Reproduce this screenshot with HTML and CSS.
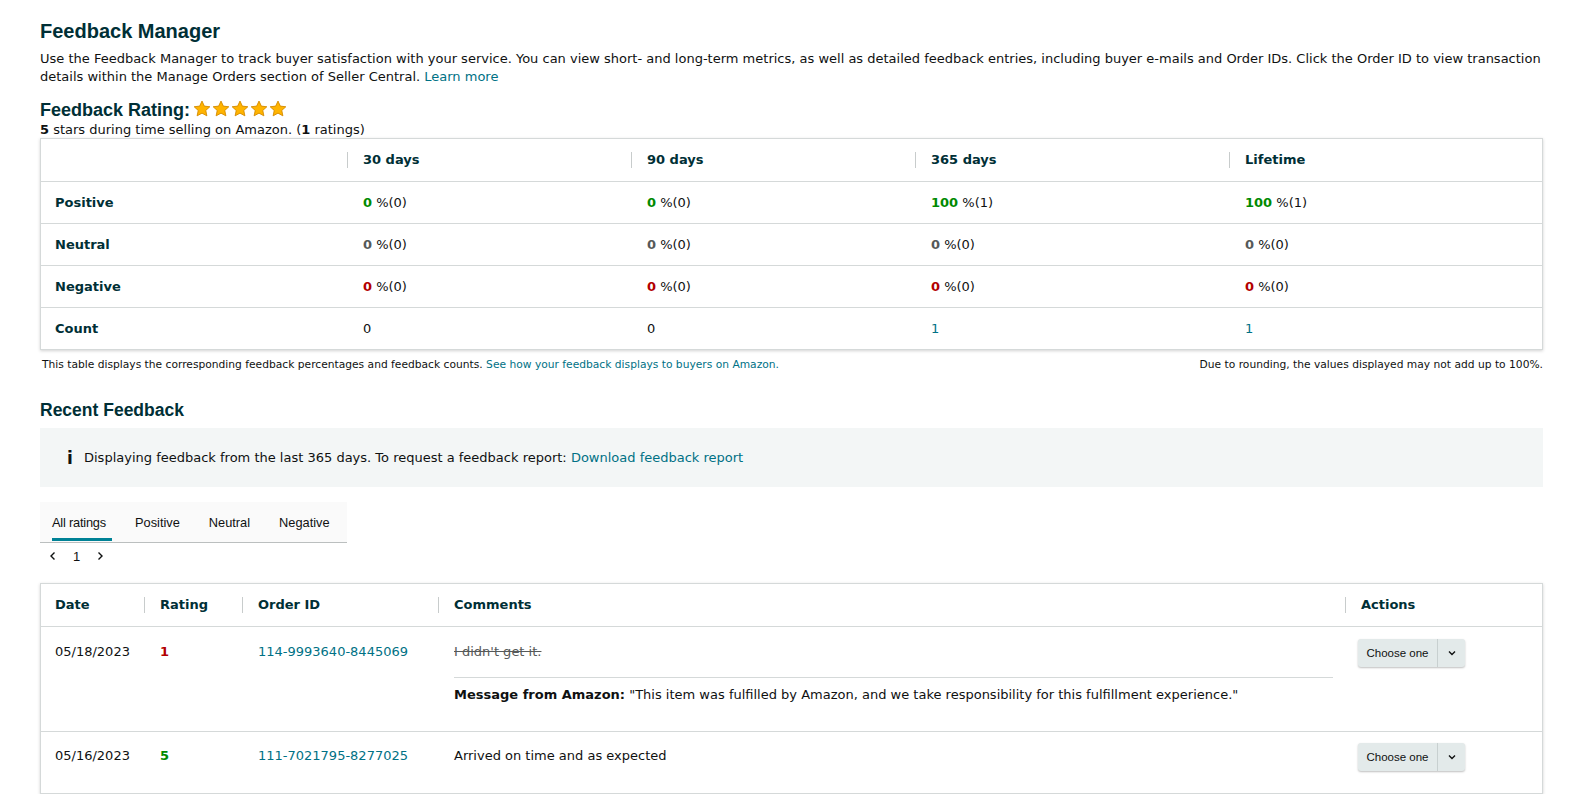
FILE: index.html
```html
<!DOCTYPE html>
<html lang="en">
<head>
    <meta charset="UTF-8">
    <title>Feedback Manager</title>
    <link rel="stylesheet" href="styles.css">
</head>
<body>
<div class="page">

    <h1>Feedback Manager</h1>
    <p class="intro">
        Use the Feedback Manager to track buyer satisfaction with your service. You can view short- and long-term metrics, as well as detailed feedback entries, including buyer e-mails and Order IDs. Click the Order ID to view transaction details within the Manage Orders section of Seller Central. <a href="#">Learn more</a>
    </p>

    <div class="rating-title">
        <h2>Feedback Rating:</h2>
        <div class="stars">
            <svg viewBox="0 0 20 20"><path d="M10 1.2l2.6 5.6 6.1.7-4.5 4.1 1.2 6-5.4-3-5.4 3 1.2-6L1.3 7.5l6.1-.7z"/></svg>
            <svg viewBox="0 0 20 20"><path d="M10 1.2l2.6 5.6 6.1.7-4.5 4.1 1.2 6-5.4-3-5.4 3 1.2-6L1.3 7.5l6.1-.7z"/></svg>
            <svg viewBox="0 0 20 20"><path d="M10 1.2l2.6 5.6 6.1.7-4.5 4.1 1.2 6-5.4-3-5.4 3 1.2-6L1.3 7.5l6.1-.7z"/></svg>
            <svg viewBox="0 0 20 20"><path d="M10 1.2l2.6 5.6 6.1.7-4.5 4.1 1.2 6-5.4-3-5.4 3 1.2-6L1.3 7.5l6.1-.7z"/></svg>
            <svg viewBox="0 0 20 20"><path d="M10 1.2l2.6 5.6 6.1.7-4.5 4.1 1.2 6-5.4-3-5.4 3 1.2-6L1.3 7.5l6.1-.7z"/></svg>
        </div>
    </div>
    <div class="rating-sub"><b>5</b> stars during time selling on Amazon. (<b>1</b> ratings)</div>

    <div class="box">
        <table class="metrics">
            <tr>
                <th class="label-col"></th>
                <th><span class="sep">30 days</span></th>
                <th><span class="sep">90 days</span></th>
                <th><span class="sep">365 days</span></th>
                <th><span class="sep">Lifetime</span></th>
            </tr>
            <tr>
                <td class="label">Positive</td>
                <td><b class="pos">0</b> %(0)</td>
                <td><b class="pos">0</b> %(0)</td>
                <td><b class="pos">100</b> %(1)</td>
                <td><b class="pos">100</b> %(1)</td>
            </tr>
            <tr>
                <td class="label">Neutral</td>
                <td><b class="neu">0</b> %(0)</td>
                <td><b class="neu">0</b> %(0)</td>
                <td><b class="neu">0</b> %(0)</td>
                <td><b class="neu">0</b> %(0)</td>
            </tr>
            <tr>
                <td class="label">Negative</td>
                <td><b class="neg">0</b> %(0)</td>
                <td><b class="neg">0</b> %(0)</td>
                <td><b class="neg">0</b> %(0)</td>
                <td><b class="neg">0</b> %(0)</td>
            </tr>
            <tr>
                <td class="label">Count</td>
                <td>0</td>
                <td>0</td>
                <td><a href="#">1</a></td>
                <td><a href="#">1</a></td>
            </tr>
        </table>
    </div>
    <div class="footnote">
        <span>This table displays the corresponding feedback percentages and feedback counts. <a href="#">See how your feedback displays to buyers on Amazon.</a></span>
        <span>Due to rounding, the values displayed may not add up to 100%.</span>
    </div>

    <h2 class="recent">Recent Feedback</h2>
    <div class="info">
        <span class="info-icon">i</span>
        <span>Displaying feedback from the last 365 days. To request a feedback report: <a href="#">Download feedback report</a></span>
    </div>

    <div class="tabs">
        <span class="tab active">All ratings</span>
        <span class="tab">Positive</span>
        <span class="tab">Neutral</span>
        <span class="tab">Negative</span>
    </div>
    <div class="pager">
        <svg viewBox="0 0 10 10"><path d="M6.5 1.5L3 5l3.5 3.5"/></svg>
        <span>1</span>
        <svg viewBox="0 0 10 10"><path d="M3.5 1.5L7 5 3.5 8.5"/></svg>
    </div>

    <div class="box feedback-box">
        <table class="feedback">
            <tr>
                <th class="c-date"><span class="head">Date</span></th>
                <th class="c-rating"><span class="sep">Rating</span></th>
                <th class="c-order"><span class="sep">Order ID</span></th>
                <th class="c-comments"><span class="sep">Comments</span></th>
                <th class="c-actions"><span class="sep">Actions</span></th>
            </tr>
            <tr class="row-first">
                <td>05/18/2023</td>
                <td><b class="neg">1</b></td>
                <td><a href="#">114-9993640-8445069</a></td>
                <td class="comment">
                    <div class="struck">I didn't get it.</div>
                    <div class="amazon-msg"><b>Message from Amazon:</b> "This item was fulfilled by Amazon, and we take responsibility for this fulfillment experience."</div>
                </td>
                <td class="actions">
                    <div class="dropdown"><span class="dd-label">Choose one</span><span class="dd-arrow"><svg viewBox="0 0 10 10"><path d="M2 3.5L5 6.5 8 3.5"/></svg></span></div>
                </td>
            </tr>
            <tr class="row-second">
                <td>05/16/2023</td>
                <td><b class="pos">5</b></td>
                <td><a href="#">111-7021795-8277025</a></td>
                <td class="comment">Arrived on time and as expected</td>
                <td class="actions">
                    <div class="dropdown"><span class="dd-label">Choose one</span><span class="dd-arrow"><svg viewBox="0 0 10 10"><path d="M2 3.5L5 6.5 8 3.5"/></svg></span></div>
                </td>
            </tr>
        </table>
    </div>

</div>
</body>
</html>
```

FILE: styles.css
```css
body {
    margin: 0;
    background-color: #ffffff;
    font-family: "DejaVu Sans", Verdana, sans-serif;
    font-size: 13px;
    color: #0f1111;
}

a {
    color: #007185;
    text-decoration: none;
}

.page {
    padding: 19px 52px 0 40px;
}

h1 {
    font-family: "Liberation Sans", Arial, sans-serif;
    font-size: 20px;
    font-weight: bold;
    color: #002f36;
    margin: 0;
    line-height: 24px;
}

.intro {
    margin: 7px 0 0 0;
    line-height: 18px;
}

.rating-title {
    display: flex;
    align-items: center;
    margin-top: 13px;
    height: 22px;
}

h2 {
    font-family: "Liberation Sans", Arial, sans-serif;
    font-size: 18px;
    font-weight: bold;
    color: #002f36;
    margin: 0;
    line-height: 22px;
}

.stars {
    display: flex;
    gap: 1px;
    margin-left: 3px;
    margin-top: -3px;
}

.stars svg {
    width: 18px;
    height: 18px;
    fill: #ffb400;
    stroke: #d48a00;
    stroke-width: 1;
}

.rating-sub {
    line-height: 16px;
    margin-top: 1px;
}

.box {
    border: 1px solid #d5d9d9;
    box-shadow: 0 1px 3px rgba(0, 0, 0, 0.18);
    background: #fff;
}

table {
    width: 100%;
    border-collapse: collapse;
}

th {
    text-align: left;
    font-weight: bold;
    color: #002f36;
    height: 42px;
    padding: 0;
}

td {
    height: 41px;
    padding: 0;
    border-top: 1px solid #d5d9d9;
}

.sep,
.head {
    display: block;
    line-height: 16px;
}

.sep {
    border-left: 1px solid #c8cccc;
    padding-left: 15px;
}

.metrics .label-col {
    width: 306px;
}

.metrics th:nth-child(2),
.metrics th:nth-child(3) {
    width: 284px;
}

.metrics th:nth-child(4) {
    width: 314px;
}

.metrics td {
    padding-left: 16px;
}

.metrics td.label {
    padding-left: 14px;
    font-weight: bold;
    color: #002f36;
}

.pos { color: #008a00; }
.neu { color: #565959; }
.neg { color: #b30000; }

.footnote {
    display: flex;
    justify-content: space-between;
    font-size: 10.7px;
    margin: 8px 0 0 2px;
    line-height: 14px;
}

.recent {
    font-size: 17.5px;
    margin-top: 28px;
    line-height: 20px;
}

.info {
    margin-top: 8px;
    background: #f3f6f6;
    height: 59px;
    display: flex;
    align-items: center;
    padding-left: 27px;
}

.info-icon {
    font-weight: bold;
    font-size: 17px;
    color: #0f1111;
    width: 17px;
}

.tabs {
    margin-top: 15px;
    width: 307px;
    height: 40px;
    background: #fafafa;
    border-bottom: 1px solid #bbbfbf;
    display: flex;
    font-family: "Liberation Sans", Arial, sans-serif;
    font-size: 12.8px;
    color: #0f1111;
}

.tab {
    padding-top: 13px;
    height: 27px;
    margin-left: 29px;
}

.tab:first-child {
    margin-left: 12px;
    padding-right: 6px;
    position: relative;
    letter-spacing: -0.2px;
}

.tab:nth-child(2) {
    margin-left: 23px;
}

.tab.active::after {
    content: "";
    position: absolute;
    left: 0;
    right: 0;
    bottom: 1px;
    height: 3px;
    background: #008296;
}

.pager {
    display: flex;
    align-items: center;
    gap: 15px;
    height: 26px;
    padding-left: 8px;
    font-family: "Liberation Sans", Arial, sans-serif;
    font-size: 13px;
}

.pager svg {
    width: 10px;
    height: 10px;
    fill: none;
    stroke: #0f1111;
    stroke-width: 1.4;
}

.feedback-box {
    margin-top: 14px;
}

.feedback th.c-date {
    width: 89px;
    padding-left: 14px;
}

.feedback th.c-rating { width: 98px; }
.feedback th.c-order { width: 196px; }
.feedback th.c-comments { width: 907px; }

.feedback td {
    vertical-align: top;
    padding-top: 17px;
    line-height: 16px;
}

.feedback td:first-child {
    padding-left: 14px;
}

.feedback td:nth-child(2),
.feedback td:nth-child(3),
.feedback td:nth-child(4) {
    padding-left: 16px;
}

.feedback .row-first td {
    height: 87px;
}

.feedback .row-second td {
    height: 45px;
    padding-top: 16px;
}

.comment {
    padding-right: 12px;
}

.struck {
    text-decoration: line-through;
    color: #565959;
    padding-bottom: 17px;
    border-bottom: 1px solid #d5d9d9;
}

.amazon-msg {
    padding-top: 9px;
}

.feedback td.actions {
    padding-top: 12px;
    padding-left: 13px;
}

.feedback .row-second td.actions {
    padding-top: 11px;
}

.dropdown {
    display: inline-flex;
    height: 28px;
    background: #e3eaea;
    border-radius: 3px;
    box-shadow: 0 1px 2px rgba(0, 0, 0, 0.25);
    font-family: "Liberation Sans", Arial, sans-serif;
    font-size: 11.5px;
    color: #0f1111;
    white-space: nowrap;
}

.dd-label {
    display: flex;
    align-items: center;
    justify-content: center;
    width: 79px;
    border-right: 1px solid #c8d0d0;
}

.dd-arrow {
    display: flex;
    align-items: center;
    justify-content: center;
    width: 27px;
}

.dd-arrow svg {
    width: 10px;
    height: 10px;
    fill: none;
    stroke: #0f1111;
    stroke-width: 1.4;
}
```
